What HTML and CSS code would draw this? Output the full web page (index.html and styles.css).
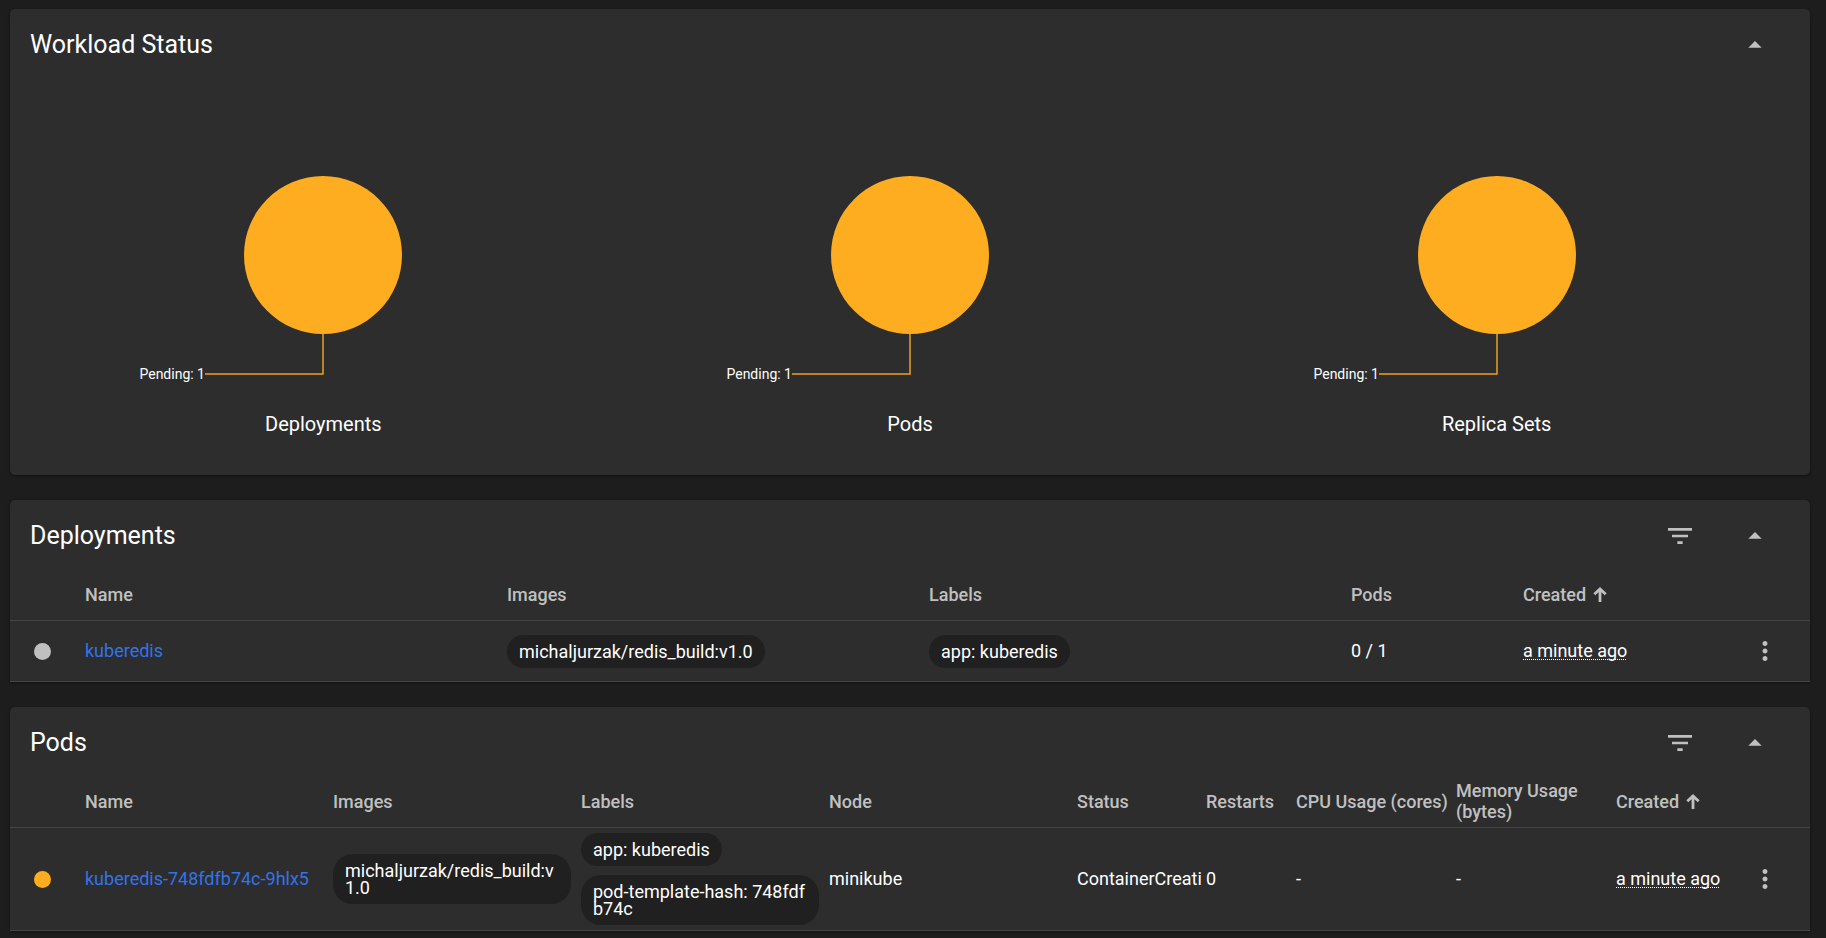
FILE: index.html
```html
<!DOCTYPE html>
<html lang="en">
<head>
<meta charset="utf-8">
<meta name="viewport" content="width=device-width, initial-scale=1">
<title>Workloads</title>
<link rel="stylesheet" href="styles.css">
</head>
<body>
<svg class="symbols" aria-hidden="true">
  <symbol id="caret-up" viewBox="0 0 24 24"><path d="M7 14l5-5 5 5z"/></symbol>
  <symbol id="filter" viewBox="0 0 24 24"><path d="M10 18h4v-2h-4v2zM3 6v2h18V6H3zm3 7h12v-2H6v2z"/></symbol>
  <symbol id="more" viewBox="0 0 24 24"><path d="M12 8c1.1 0 2-.9 2-2s-.9-2-2-2-2 .9-2 2 .9 2 2 2zm0 2c-1.1 0-2 .9-2 2s.9 2 2 2 2-.9 2-2-.9-2-2-2zm0 6c-1.1 0-2 .9-2 2s.9 2 2 2 2-.9 2-2-.9-2-2-2z"/></symbol>
  <symbol id="sort-up" viewBox="0 0 14 15"><path d="M7 1.500v13.500M1.300 7.300L7 2l5.700 5.300" fill="none" stroke="currentColor" stroke-width="2.800"/></symbol>
</svg>
<main class="page">
  <section class="card">
    <header class="card-header">
      <h2 class="card-title">Workload Status</h2>
      <button class="icon-button" type="button" aria-label="Collapse workload status"><svg class="icon"><use href="#caret-up"/></svg></button>
    </header>
    <div class="charts">
      <figure class="chart">
        <svg class="pie" viewBox="0 0 400 320" role="img" aria-label="Deployments, pending 1">
          <circle class="pie-slice" cx="200" cy="176" r="79"/>
          <path class="pie-line" d="M200 255v40H82"/>
          <text class="pie-label" x="82" y="300">Pending: 1</text>
        </svg>
        <figcaption class="chart-title">Deployments</figcaption>
      </figure>
      <figure class="chart">
        <svg class="pie" viewBox="0 0 400 320" role="img" aria-label="Pods, pending 1">
          <circle class="pie-slice" cx="200" cy="176" r="79"/>
          <path class="pie-line" d="M200 255v40H82"/>
          <text class="pie-label" x="82" y="300">Pending: 1</text>
        </svg>
        <figcaption class="chart-title">Pods</figcaption>
      </figure>
      <figure class="chart">
        <svg class="pie" viewBox="0 0 400 320" role="img" aria-label="Replica sets, pending 1">
          <circle class="pie-slice" cx="200" cy="176" r="79"/>
          <path class="pie-line" d="M200 255v40H82"/>
          <text class="pie-label" x="82" y="300">Pending: 1</text>
        </svg>
        <figcaption class="chart-title">Replica Sets</figcaption>
      </figure>
    </div>
  </section>

  <section class="card card-list">
    <header class="card-header">
      <h2 class="card-title">Deployments</h2>
      <button class="icon-button" type="button" aria-label="Filter deployments"><svg class="icon"><use href="#filter"/></svg></button>
      <button class="icon-button" type="button" aria-label="Collapse deployments"><svg class="icon"><use href="#caret-up"/></svg></button>
    </header>
    <table class="list">
      <colgroup>
        <col class="col-status"><col><col><col><col class="col-pods"><col class="col-created-wide"><col class="col-menu">
      </colgroup>
      <thead>
        <tr>
          <th></th><th>Name</th><th>Images</th><th>Labels</th><th>Pods</th>
          <th><button class="sort-button" type="button">Created<svg class="sort-icon"><use href="#sort-up"/></svg></button></th>
          <th></th>
        </tr>
      </thead>
      <tbody>
        <tr>
          <td class="cell-status"><span class="dot"></span></td>
          <td><a class="link" href="#kuberedis">kuberedis</a></td>
          <td class="cell-chips"><div class="chips"><span class="chip">michaljurzak/redis_build:v1.0</span></div></td>
          <td class="cell-chips"><div class="chips"><span class="chip">app: kuberedis</span></div></td>
          <td>0 / 1</td>
          <td><span class="age">a minute ago</span></td>
          <td class="cell-menu"><button class="menu-button" type="button" aria-label="Actions for kuberedis"><svg class="menu-icon"><use href="#more"/></svg></button></td>
        </tr>
      </tbody>
    </table>
  </section>

  <section class="card card-list">
    <header class="card-header">
      <h2 class="card-title">Pods</h2>
      <button class="icon-button" type="button" aria-label="Filter pods"><svg class="icon"><use href="#filter"/></svg></button>
      <button class="icon-button" type="button" aria-label="Collapse pods"><svg class="icon"><use href="#caret-up"/></svg></button>
    </header>
    <table class="list">
      <colgroup>
        <col class="col-status"><col><col><col><col><col class="col-state"><col class="col-restarts"><col class="col-usage"><col class="col-usage"><col class="col-created"><col class="col-menu">
      </colgroup>
      <thead>
        <tr>
          <th></th><th>Name</th><th>Images</th><th>Labels</th><th>Node</th><th>Status</th><th>Restarts</th>
          <th>CPU Usage (cores)</th><th>Memory Usage (bytes)</th>
          <th><button class="sort-button" type="button">Created<svg class="sort-icon"><use href="#sort-up"/></svg></button></th>
          <th></th>
        </tr>
      </thead>
      <tbody>
        <tr>
          <td class="cell-status"><span class="dot dot-pending"></span></td>
          <td><a class="link" href="#pod">kuberedis-748fdfb74c-9hlx5</a></td>
          <td class="cell-chips"><div class="chips"><span class="chip">michaljurzak/redis_build:v1.0</span></div></td>
          <td class="cell-chips"><div class="chips"><span class="chip">app: kuberedis</span><span class="chip">pod-template-hash: 748fdfb74c</span></div></td>
          <td>minikube</td>
          <td><div class="clip">ContainerCreating</div></td>
          <td>0</td>
          <td>-</td>
          <td>-</td>
          <td><span class="age">a minute ago</span></td>
          <td class="cell-menu"><button class="menu-button" type="button" aria-label="Actions for kuberedis-748fdfb74c-9hlx5"><svg class="menu-icon"><use href="#more"/></svg></button></td>
        </tr>
      </tbody>
    </table>
  </section>
</main>
</body>
</html>
```
FILE: styles.css
```css
* { box-sizing: border-box; }

body {
  margin: 0;
  background: #1d1d1d;
  color: #fff;
  font-family: Roboto, "Liberation Sans", sans-serif;
  font-size: 18px;
  line-height: 21px;
}

.symbols { display: none; }

.page {
  display: flex;
  flex-direction: column;
  gap: 25px;
  padding: 9px 16px 6px 10px;
}

.card {
  background: #2d2d2d;
  border-radius: 5px;
  box-shadow: 0 1px 3px rgba(0, 0, 0, 0.4);
}

.card-list { border-radius: 5px 5px 0 0; }

.card-header {
  display: flex;
  align-items: center;
  height: 70px;
  padding: 2px 30px 0 20px;
}

.card-title {
  flex: 1;
  margin: 0;
  font-size: 25px;
  font-weight: 400;
  line-height: 30px;
}

.icon-button,
.menu-button,
.sort-button {
  display: flex;
  align-items: center;
  justify-content: center;
  margin: 0;
  padding: 0;
  border: 0;
  background: none;
  color: #c0c0c0;
  font: inherit;
  cursor: pointer;
}

.icon-button { width: 50px; height: 50px; }
.icon-button + .icon-button { margin-left: 25px; }

.icon { width: 32px; height: 32px; fill: currentColor; }

/* Status charts */
.charts {
  display: grid;
  grid-template-columns: repeat(3, 1fr);
  padding: 0 20px 39px;
}

.chart {
  display: flex;
  flex-direction: column;
  align-items: center;
  gap: 13px;
  margin: 0;
}

.pie { width: 400px; max-width: 100%; height: 320px; }
.pie-slice { fill: #ffad20; }
.pie-line { fill: none; stroke: #ffad20; stroke-width: 1.5; opacity: 0.9; }
.pie-label { fill: #fff; font-size: 14px; text-anchor: end; }
.chart-title { font-size: 20px; line-height: 24px; }

/* Resource lists */
.list {
  width: 100%;
  border-collapse: separate;
  border-spacing: 0;
  table-layout: fixed;
}

.col-status { width: 75px; }
.col-pods { width: 172px; }
.col-created-wide { width: 197px; }
.col-created { width: 104px; }
.col-state { width: 129px; }
.col-restarts { width: 90px; }
.col-usage { width: 160px; }
.col-menu { width: 90px; }

.list th,
.list td {
  padding: 0 0 2px;
  border-bottom: 1px solid #464646;
  text-align: left;
  vertical-align: middle;
}

.list th {
  height: 51px;
  color: #c0c0c0;
  font-weight: 500;
}

.list td { height: 61px; }
.list .cell-status { padding: 0 0 0 24px; }
.list .cell-menu { padding: 0; }
.list .cell-chips { padding: 5px 10px 5px 0; }

.sort-icon { width: 14px; height: 15px; margin-left: 7px; }

.dot {
  display: block;
  width: 17px;
  height: 17px;
  border-radius: 50%;
  background: #c0c0c0;
}

.dot-pending { background: #ffad20; }

.link { color: #3273ea; text-decoration: none; }

.chips {
  display: flex;
  flex-direction: column;
  align-items: flex-start;
  gap: 9px;
}

.chip {
  max-width: 100%;
  padding: 8px 12px;
  border-radius: 20px;
  background: #202020;
  line-height: 17px;
  word-break: break-all;
}

.clip { margin-right: 4px; overflow: hidden; white-space: nowrap; }

.age {
  text-decoration: underline dotted 1px;
  text-underline-offset: 2px;
  text-decoration-skip-ink: none;
  white-space: nowrap;
}

.menu-button { width: 90px; height: 40px; }
.menu-icon { width: 30px; height: 30px; fill: currentColor; }
```
